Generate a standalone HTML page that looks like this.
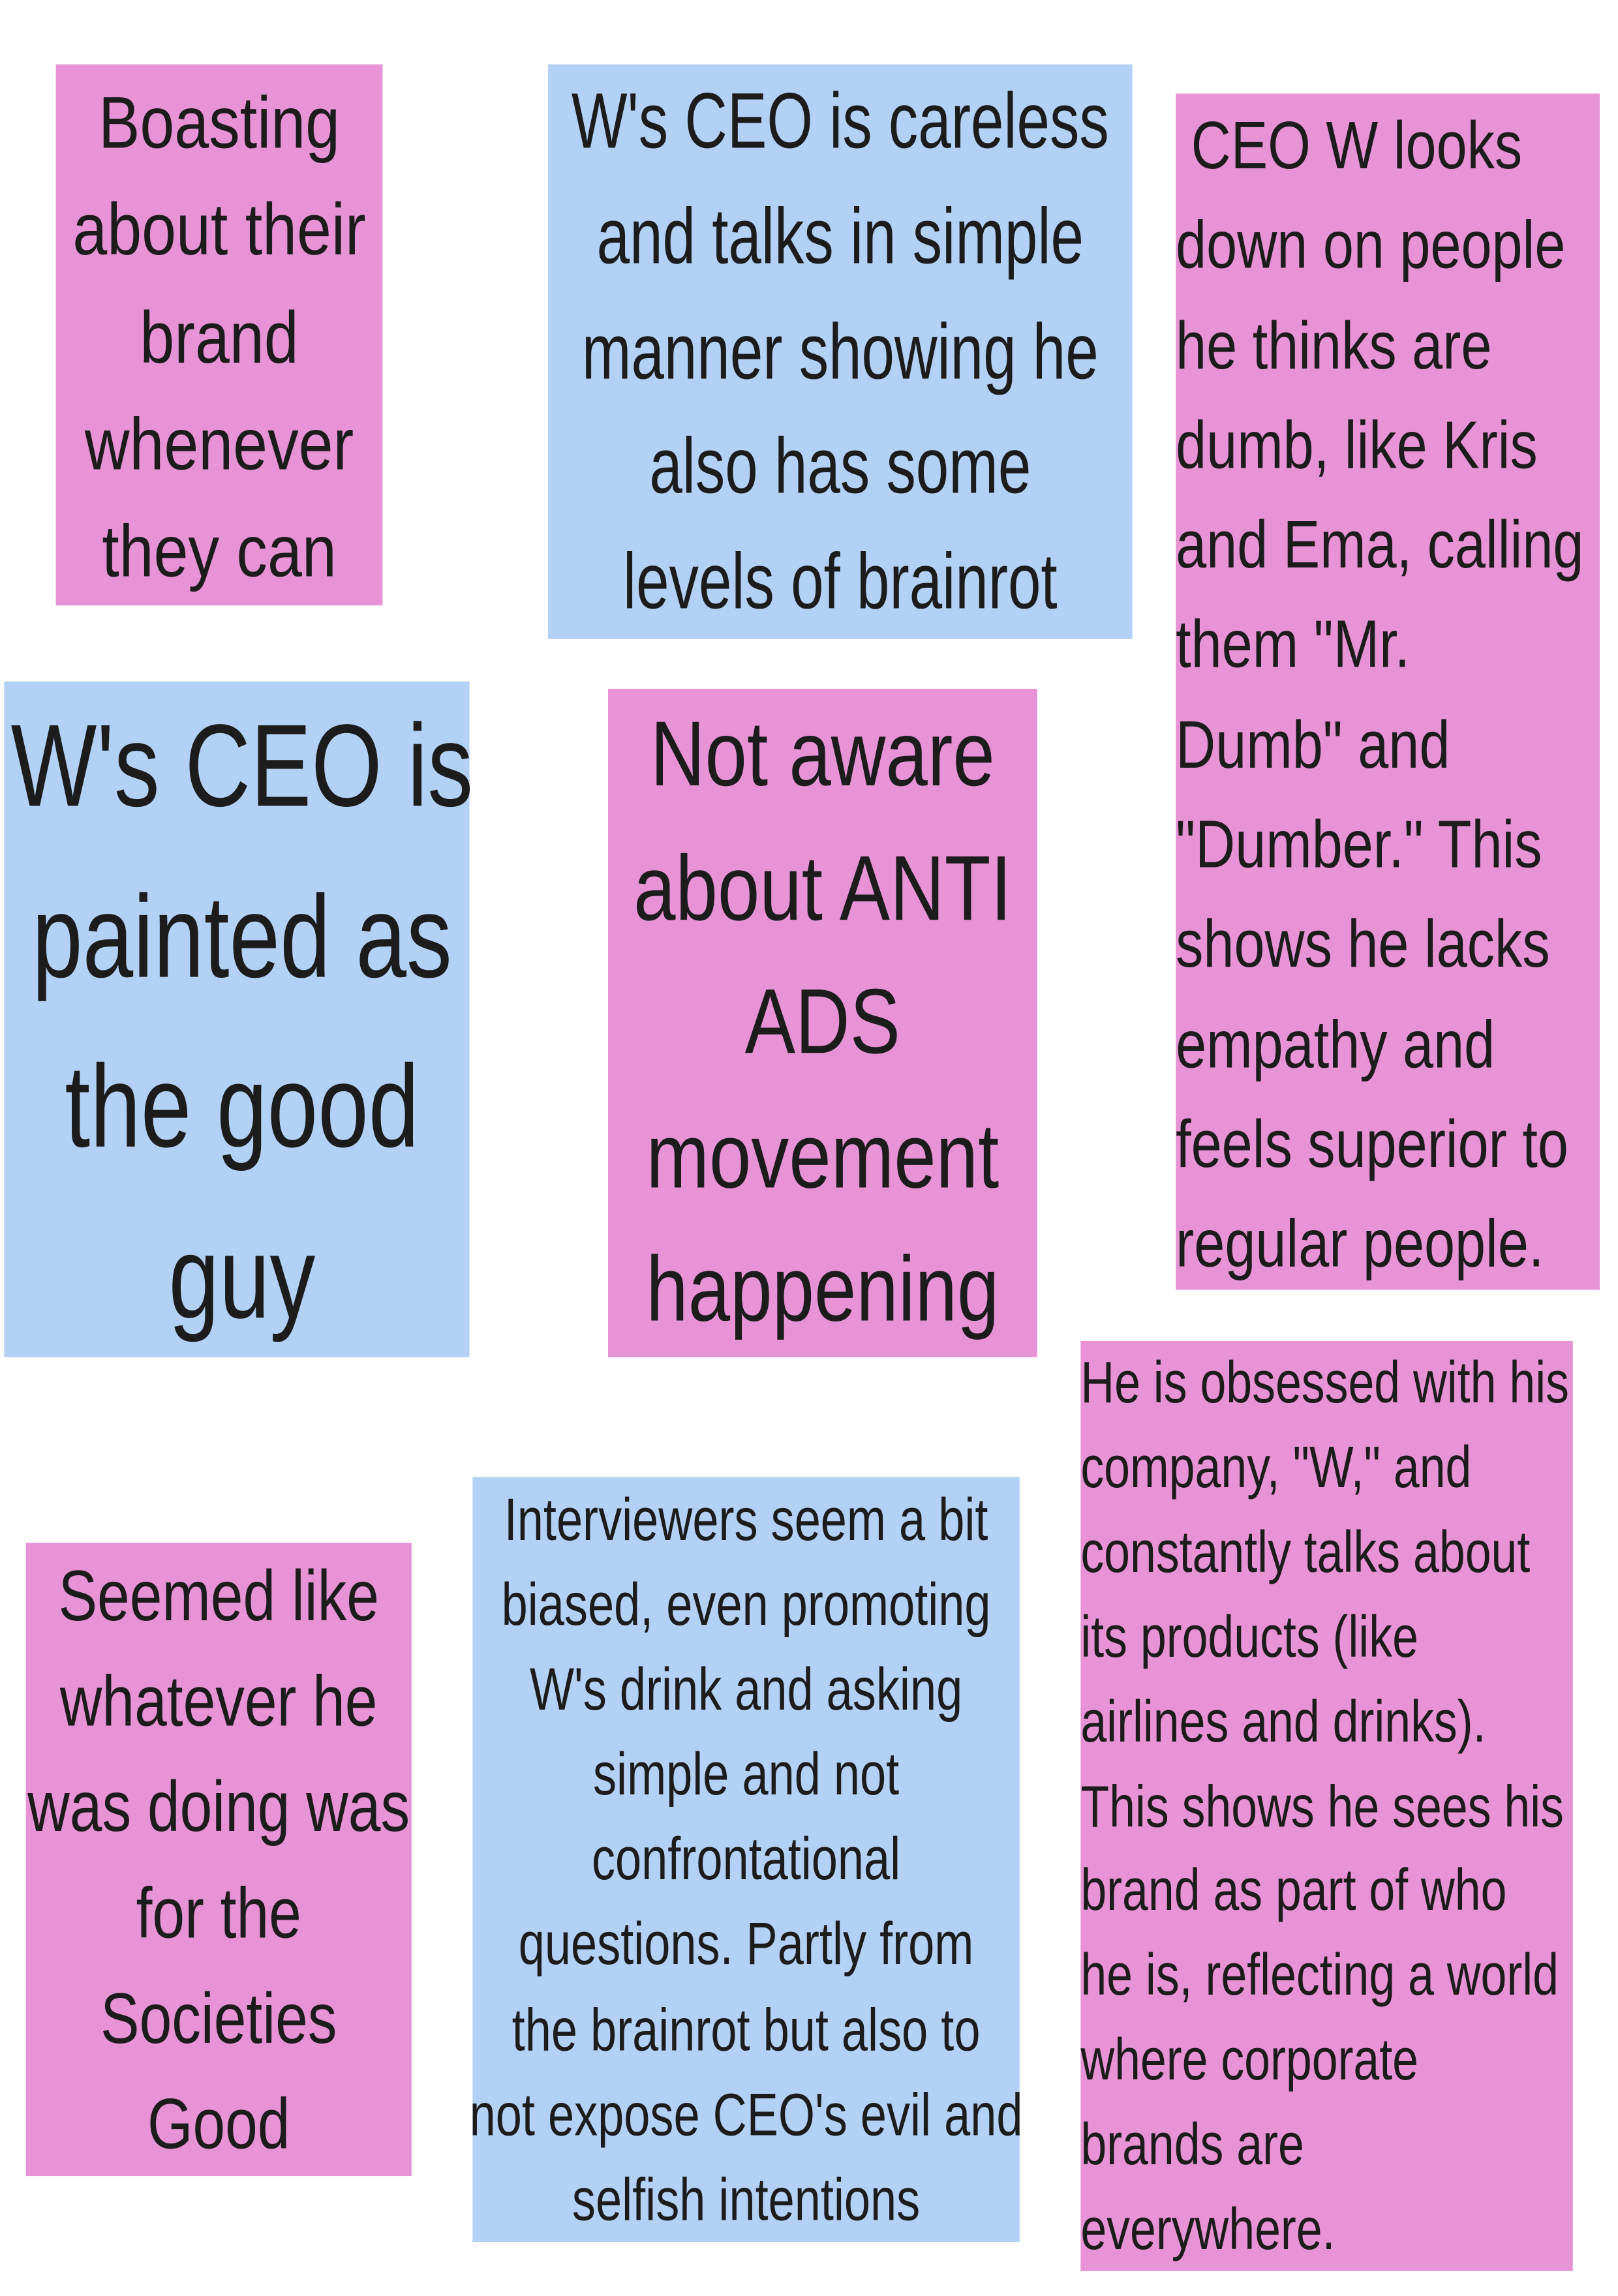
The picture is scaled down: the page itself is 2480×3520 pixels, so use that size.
<!DOCTYPE html>
<html><head><meta charset="utf-8"><style>
html,body{margin:0;padding:0;background:#fff;}
body{width:2480px;height:3508px;overflow:hidden;position:relative;}
#s{position:absolute;left:0;top:0;width:1570px;height:1570px;transform-origin:0 0;transform:scale(1.585,2.242);}
.b{position:absolute;}
.p{background:#e893d6;}
.u{background:#b2d1f5;}
.t{position:absolute;left:0;right:0;white-space:nowrap;font-family:"Liberation Sans","DejaVu Sans",sans-serif;color:#1c1c1c;}
.c{text-align:center;transform-origin:50% 0;}
.l{text-align:left;transform-origin:0 0;}
</style></head><body><div id="s">

<div class="b p" style="left:54px;top:44px;width:316px;height:370px;">
<div class="t c" style="top:4px;font-size:50px;line-height:73.3px;transform:scaleX(1.2);">Boasting<br>about their<br>brand<br>whenever<br>they can</div></div>

<div class="b u" style="left:530px;top:44px;width:565px;height:393px;">
<div class="t c" style="top:0px;font-size:54px;line-height:78.75px;transform:scaleX(1.06);">W's CEO is careless<br>and talks in simple<br>manner showing he<br>also has some<br>levels of brainrot</div></div>

<div class="b p" style="left:1137px;top:64px;width:410px;height:818px;">
<div class="t l" style="top:1px;font-size:46px;line-height:68.3px;transform:scaleX(1.16);">&nbsp;CEO W looks<br>down on people<br>he thinks are<br>dumb, like Kris<br>and Ema, calling<br>them "Mr.<br>Dumb" and<br>"Dumber." This<br>shows he lacks<br>empathy and<br>feels superior to<br>regular people.</div></div>

<div class="b u" style="left:4px;top:466px;width:450px;height:462px;">
<div class="t c" style="top:0px;left:10px;font-size:80px;line-height:116.7px;transform:scaleX(1.1);">W's CEO is<br>painted as<br>the good<br>guy</div></div>

<div class="b p" style="left:588px;top:471px;width:415px;height:457px;">
<div class="t c" style="top:0px;font-size:63px;line-height:91.5px;transform:scaleX(1.16);">Not aware<br>about ANTI<br>ADS<br>movement<br>happening</div></div>

<div class="b p" style="left:1045px;top:917px;width:476px;height:636px;">
<div class="t l" style="top:1px;font-size:40px;line-height:57.9px;transform:scaleX(1.13);">He is obsessed with his<br>company, "W," and<br>constantly talks about<br>its products (like<br>airlines and drinks).<br>This shows he sees his<br>brand as part of who<br>he is, reflecting a world<br>where corporate<br>brands are<br>everywhere.</div></div>

<div class="b p" style="left:25px;top:1055px;width:373px;height:433px;">
<div class="t c" style="top:1px;font-size:49px;line-height:72.2px;transform:scaleX(1.15);">Seemed like<br>whatever he<br>was doing was<br>for the<br>Societies<br>Good</div></div>

<div class="b u" style="left:457px;top:1010px;width:529px;height:523px;">
<div class="t c" style="top:0px;font-size:41px;line-height:58.1px;transform:scaleX(1.11);">Interviewers seem a bit<br>biased, even promoting<br>W's drink and asking<br>simple and not<br>confrontational<br>questions. Partly from<br>the brainrot but also to<br>not expose CEO's evil and<br>selfish intentions</div></div>

</div></body></html>
